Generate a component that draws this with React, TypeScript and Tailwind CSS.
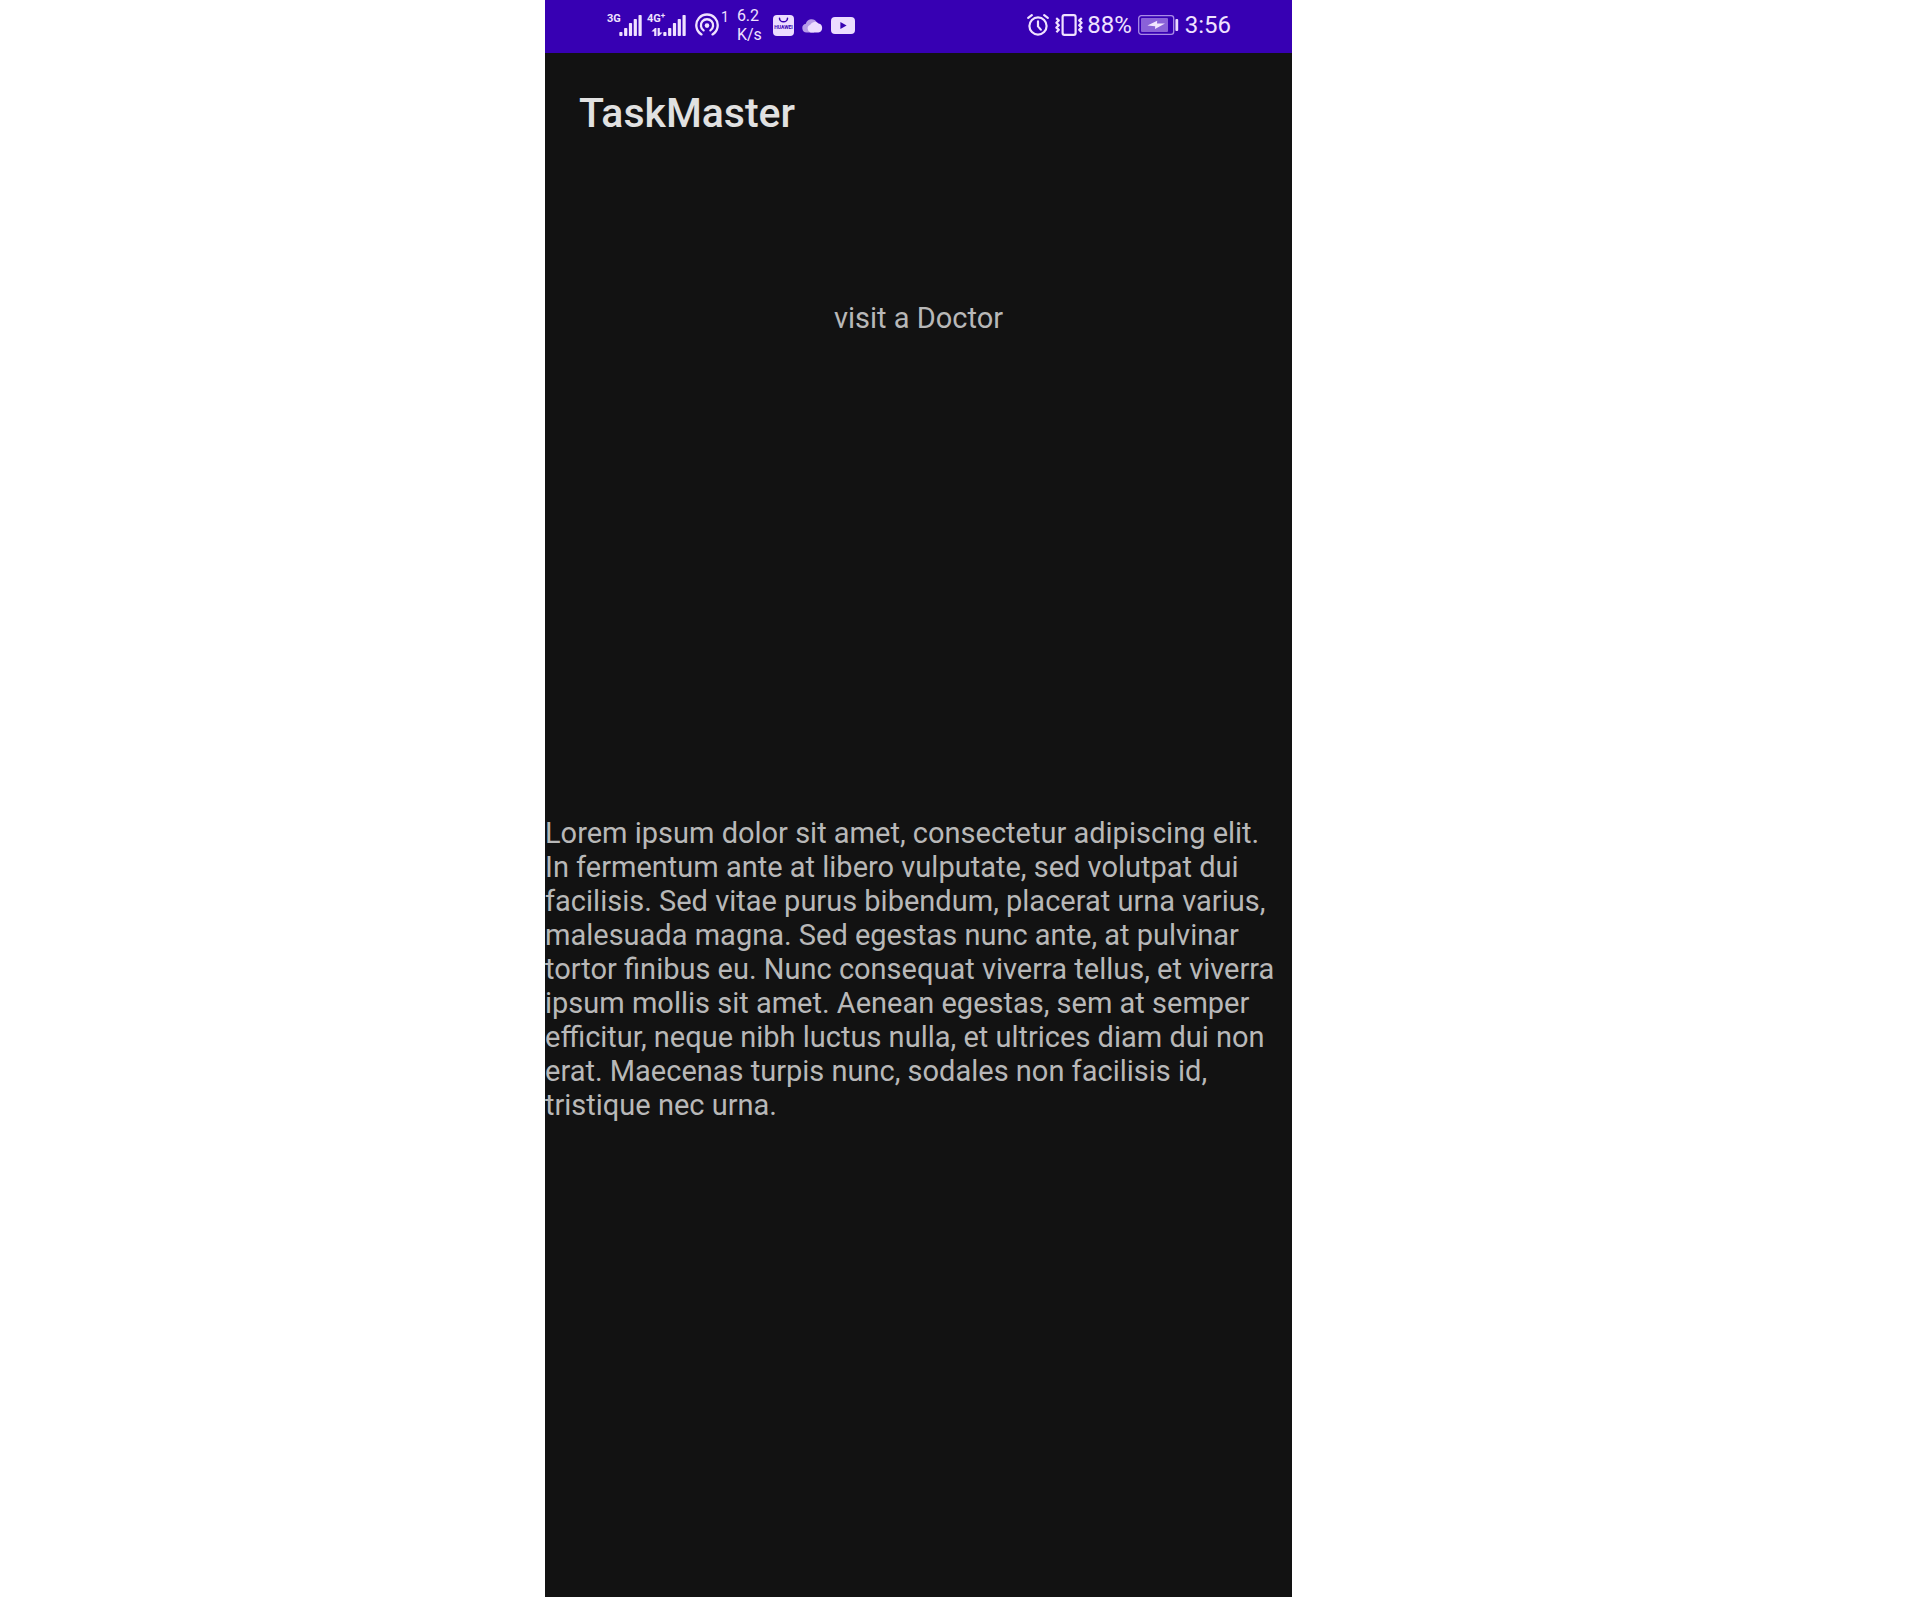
const barHeights = [4, 8, 13, 17, 21];

function SignalBars({ label }: { label: string }) {
  return (
    <svg width="24" height="24" viewBox="0 0 24 24" fill="currentColor" role="img" aria-label={label}>
      {barHeights.map((h, i) => (
        <rect key={h} x={0.3 + i * 4.8} y={23 - h} width="3.2" height={h} rx="0.8" />
      ))}
    </svg>
  );
}

function HotspotIcon() {
  return (
    <svg width="24" height="24" viewBox="0 0 24 24" fill="none" stroke="currentColor" strokeWidth="2.3" strokeLinecap="round" role="img" aria-label="Hotspot">
      <path d="M6.5 21.4A10.7 10.7 0 1 1 17.5 21.4" />
      <path d="M8.6 17.4A6.1 6.1 0 1 1 15.4 17.4" />
      <circle cx="12" cy="12.6" r="2.3" fill="currentColor" stroke="none" />
    </svg>
  );
}

function DataArrows() {
  return (
    <svg width="12" height="8" viewBox="0 0 12 8" fill="currentColor" aria-hidden="true">
      <path d="M0.4 3.4 4 0h1.4v8H3.2V3.4z" />
      <path d="M11.6 4.6 8 8H6.6V0h2.2v4.6z" />
    </svg>
  );
}

function StoreIcon() {
  return (
    <svg width="21" height="21" viewBox="0 0 21 21" role="img" aria-label="Huawei AppGallery">
      <rect width="21" height="21" rx="4" fill="#ecdcff" />
      <path d="M6.5 3.2a4 3.6 0 0 0 8 0" fill="none" stroke="#3700b3" strokeWidth="1.5" strokeLinecap="round" />
      <text x="10.5" y="14" textAnchor="middle" fontSize="5" fontWeight="700" fill="#3700b3">
        HUAWEI
      </text>
    </svg>
  );
}

function CloudIcon() {
  return (
    <svg width="21" height="15" viewBox="0 0 21 15" role="img" aria-label="Cloud">
      <path d="M4.6 14.4a4.4 4.4 0 0 1-.8-8.7A6 6 0 0 1 14.8 4.2L12 14.4z" fill="#b79be8" />
      <path d="M8.6 14.4a4 4 0 0 1-.4-7.6A5.2 5.2 0 0 1 16.6 5.4a4.6 4.6 0 0 1-.2 9z" fill="#ecdcff" />
    </svg>
  );
}

function VideoIcon() {
  return (
    <svg width="24" height="17" viewBox="0 0 24 17" role="img" aria-label="YouTube">
      <rect width="24" height="17" rx="4" fill="#ecdcff" />
      <path d="M9.4 5v7l6.2-3.5z" fill="#3700b3" />
    </svg>
  );
}

function AlarmIcon() {
  return (
    <svg width="22" height="22" viewBox="0 0 22 22" fill="none" stroke="currentColor" strokeWidth="2.2" strokeLinecap="round" strokeLinejoin="round" role="img" aria-label="Alarm">
      <circle cx="11" cy="12" r="8.6" />
      <path d="M11 7.4v5l2.8 3.2M1.2 3.8 4.8 1.2M20.8 3.8 17.2 1.2" />
    </svg>
  );
}

function VibrateIcon() {
  return (
    <svg width="28" height="22" viewBox="0 0 28 22" fill="none" stroke="currentColor" strokeLinejoin="round" role="img" aria-label="Vibrate">
      <rect x="7.6" y="1.1" width="13" height="19.8" rx="1.8" strokeWidth="2.2" />
      <path d="M1.2 4.2 3.8 6.4 1.4 8.8 3.8 11.2 1.4 13.6 3.8 15.8 1.4 18.2" strokeWidth="2.2" />
      <path d="M26.8 4.2 24.2 6.4 26.6 8.8 24.2 11.2 26.6 13.6 24.2 15.8 26.6 18.2" strokeWidth="2.2" />
    </svg>
  );
}

function BatteryIcon() {
  return (
    <svg width="41" height="20" viewBox="0 0 41 20" role="img" aria-label="Battery charging">
      <rect x="0.7" y="0.7" width="35" height="18.6" rx="2.6" fill="none" stroke="#a98be6" strokeWidth="1.3" />
      <rect x="3" y="3" width="27" height="14" rx="1" fill="#8a62d8" />
      <rect x="37.4" y="4" width="2.8" height="12" rx="1" fill="#ecdcff" />
      <path d="M9.4 10.4 19.2 5.8 19 8.4H27L17 14 17.2 11.2z" fill="#f3e6ff" />
    </svg>
  );
}

function StatusBar() {
  return (
    <div className="flex h-[53px] items-center justify-between bg-[#3700b3] px-[62px] pb-[3px] text-[#f0e2ff]">
      <div className="flex items-center">
        <div className="flex h-6 items-start">
          <span className="w-3 text-[11px] leading-3 font-bold">3G</span>
          <SignalBars label="3G signal" />
        </div>
        <div className="ml-1 flex h-6 items-start">
          <div className="flex w-4 flex-col items-end gap-[3px]">
            <span className="w-4 text-[11px] leading-3 font-bold">
              4G<sup className="text-[8px] leading-none">+</sup>
            </span>
            <DataArrows />
          </div>
          <SignalBars label="4G signal" />
        </div>
        <div className="ml-2 flex items-start">
          <HotspotIcon />
          <span className="-mt-1 ml-0.5 text-sm leading-4">1</span>
        </div>
        <div className="ml-2 w-9 text-base leading-[19px]">
          <div>6.2</div>
          <div>K/s</div>
        </div>
        <div className="flex items-center gap-2">
          <StoreIcon />
          <CloudIcon />
          <VideoIcon />
        </div>
      </div>
      <div className="flex items-center text-2xl leading-7">
        <AlarmIcon />
        <span className="ml-1.5 flex">
          <VibrateIcon />
        </span>
        <span className="mr-1.5 ml-1">88%</span>
        <BatteryIcon />
        <span className="-mr-px ml-1.5">3:56</span>
      </div>
    </div>
  );
}

export default function App() {
  return (
    <div className="flex min-h-screen justify-center bg-white pb-[3px] font-['Roboto',sans-serif] lg:pr-[83px]">
      <div className="flex w-full max-w-[747px] flex-col bg-[#121212]">
        <StatusBar />
        <header className="flex h-[120px] items-center px-[34px]">
          <h1 className="text-[41px] leading-[50px] font-medium text-[#e1e1e1]">TaskMaster</h1>
        </header>
        <main className="flex flex-col pt-32 text-[29px] leading-[34px] text-[#b8b8b8]">
          <h2 className="text-center">visit a Doctor</h2>
          <p className="mt-[481px] pr-3">
            Lorem ipsum dolor sit amet, consectetur adipiscing elit. In fermentum ante at libero vulputate, sed volutpat dui
            facilisis. Sed vitae purus bibendum, placerat urna varius, malesuada magna. Sed egestas nunc ante, at pulvinar
            tortor finibus eu. Nunc consequat viverra tellus, et viverra ipsum mollis sit amet. Aenean egestas, sem at semper
            efficitur, neque nibh luctus nulla, et ultrices diam dui non erat. Maecenas turpis nunc, sodales non facilisis id,
            tristique nec urna.
          </p>
        </main>
      </div>
    </div>
  );
}
